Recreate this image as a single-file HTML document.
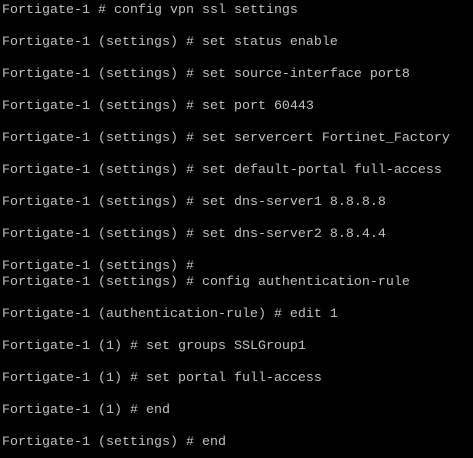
<!DOCTYPE html>
<html><head><style>
html,body{margin:0;padding:0;background:#000;width:473px;height:458px;overflow:hidden}
pre{margin:0;position:absolute;left:2px;top:3px;font-family:"Liberation Mono",monospace;font-size:13.33px;line-height:16px;color:#c0c0c0}
</style></head><body><pre>Fortigate-1 # config vpn ssl settings

Fortigate-1 (settings) # set status enable

Fortigate-1 (settings) # set source-interface port8

Fortigate-1 (settings) # set port 60443

Fortigate-1 (settings) # set servercert Fortinet_Factory

Fortigate-1 (settings) # set default-portal full-access

Fortigate-1 (settings) # set dns-server1 8.8.8.8

Fortigate-1 (settings) # set dns-server2 8.8.4.4

Fortigate-1 (settings) #
Fortigate-1 (settings) # config authentication-rule

Fortigate-1 (authentication-rule) # edit 1

Fortigate-1 (1) # set groups SSLGroup1

Fortigate-1 (1) # set portal full-access

Fortigate-1 (1) # end

Fortigate-1 (settings) # end</pre></body></html>
